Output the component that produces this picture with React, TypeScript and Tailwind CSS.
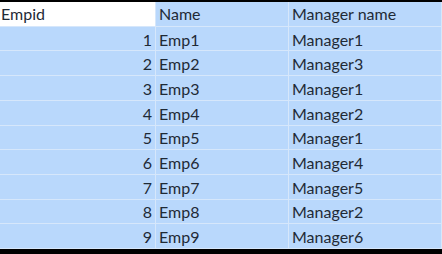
const rows = [
  { id: 1, name: 'Emp1', manager: 'Manager1' },
  { id: 2, name: 'Emp2', manager: 'Manager3' },
  { id: 3, name: 'Emp3', manager: 'Manager1' },
  { id: 4, name: 'Emp4', manager: 'Manager2' },
  { id: 5, name: 'Emp5', manager: 'Manager1' },
  { id: 6, name: 'Emp6', manager: 'Manager4' },
  { id: 7, name: 'Emp7', manager: 'Manager5' },
  { id: 8, name: 'Emp8', manager: 'Manager2' },
  { id: 9, name: 'Emp9', manager: 'Manager6' },
];

const cell = 'flex items-center border-b border-r border-[#d6e7fb] bg-[#b9d8fc] px-[3px] pt-[2px]';

const App = () => {
  return (
    <div className="flex h-[254px] w-[442px] flex-col bg-black pt-[2px] pb-[5px] font-['Lato',sans-serif] text-[16px] leading-none text-[#1f2a36]">
      <div className="grid flex-1 grid-cols-[156px_133px_1fr] grid-rows-10">
        <div className="flex items-center border-b border-r border-[#d6e7fb] bg-white px-[1px]">Empid</div>
        <div className="flex items-center border-b border-r border-[#d6e7fb] bg-[#b9d8fc] px-[3px]">Name</div>
        <div className="flex items-center border-b border-r border-[#d6e7fb] bg-[#b9d8fc] px-[3px]">Manager name</div>
        {rows.map((r) => (
          <div key={r.id} className="contents">
            <div className={`${cell} justify-end`}>{r.id}</div>
            <div className={cell}>{r.name}</div>
            <div className={cell}>{r.manager}</div>
          </div>
        ))}
      </div>
    </div>
  );
};

export default App;
